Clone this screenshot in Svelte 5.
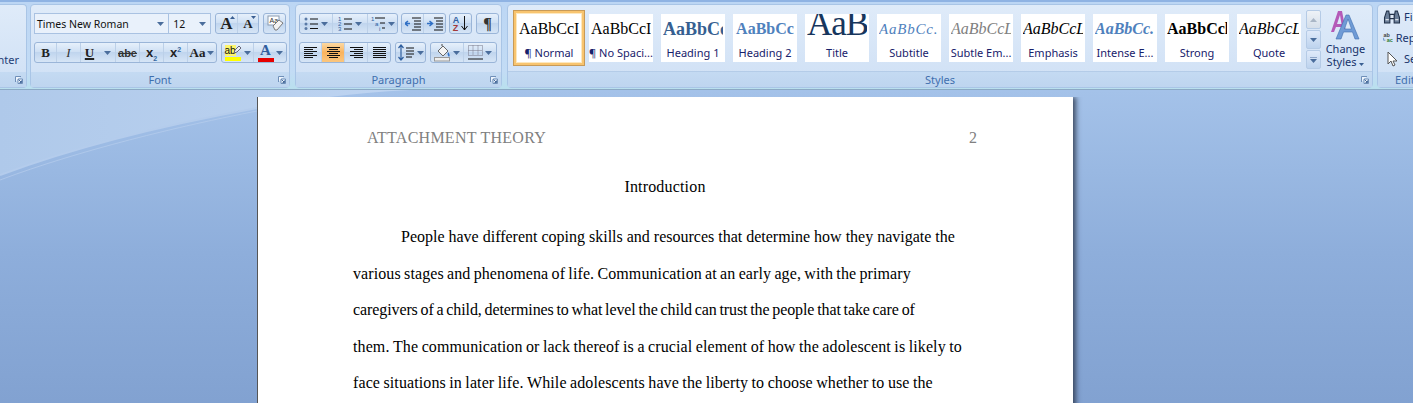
<script>
  const tiles = [
    { cls: 'p-normal', label: '¶ Normal', text: 'AaBbCcI', sel: true },
    { cls: 'p-normal', label: '¶ No Spaci...', text: 'AaBbCcI' },
    { cls: 'p-h1', label: 'Heading 1', text: 'AaBbCc' },
    { cls: 'p-h2', label: 'Heading 2', text: 'AaBbCc' },
    { cls: 'p-title', label: 'Title', text: 'AaB' },
    { cls: 'p-sub', label: 'Subtitle', text: 'AaBbCc.' },
    { cls: 'p-sem', label: 'Subtle Em...', text: 'AaBbCcL' },
    { cls: 'p-em', label: 'Emphasis', text: 'AaBbCcL' },
    { cls: 'p-iem', label: 'Intense E...', text: 'AaBbCc.' },
    { cls: 'p-strong', label: 'Strong', text: 'AaBbCcl' },
    { cls: 'p-em', label: 'Quote', text: 'AaBbCcL' }
  ];
  const lines = [
    { t: 'People have different coping skills and resources that determine how they navigate the', w: 554, ls: 0, indent: true },
    { t: 'various stages and phenomena of life. Communication at an early age, with the primary', w: 558, ls: 0.1 },
    { t: 'caregivers of a child, determines to what level the child can trust the people that take care of', w: 562, ls: -0.1 },
    { t: 'them. The communication or lack thereof is a crucial element of how the adolescent is likely to', w: 609, ls: 0.1 },
    { t: 'face situations in later life. While adolescents have the liberty to choose whether to use the', w: 580, ls: 0.1 }
  ];
</script>

{#snippet arrow()}
  <svg class="arr" width="7" height="4" viewBox="0 0 7 4"><path d="M0 0h7L3.5 4z" fill="#4a6d9c" /></svg>
{/snippet}

{#snippet launcher()}
  <svg class="launch" width="8" height="8" viewBox="0 0 8 8"><path d="M.5 6V.5H6M3 3h4.5v4.5H3z" fill="#eef5fd" stroke="#6f8fb8" /><path d="M3.5 3.5l3 3M6.5 4.5v2h-2" fill="none" stroke="#4a6d9c" /></svg>
{/snippet}

{#snippet bars(rows)}
  <svg width="15" height="13" viewBox="0 0 15 13">
    {#each rows as r, i}
      <path d="M{r[0]} {i * 2 + 1.5}H{r[1]}" stroke="#111" />
    {/each}
  </svg>
{/snippet}

<div class="root">
  <header class="ribbon">
    <section class="group clip">
      <div class="tools clip-tools"><span class="center-tail">nter</span></div>
      <div class="label"><span></span>{@render launcher()}</div>
    </section>

    <section class="group font-group">
      <div class="tools">
        <div class="row">
          <div class="combo font-name"><span>Times New Roman</span>{@render arrow()}</div>
          <div class="combo font-size"><span>12</span>{@render arrow()}</div>
          <div class="bgroup grow">
            <button style="width:22px"><b class="big">A</b><svg class="sup" width="5" height="3" viewBox="0 0 5 3"><path d="M0 3h5L2.500 0z" fill="#3a5f92" /></svg></button>
            <button style="width:20px"><b class="small">A</b><svg class="sup" width="5" height="3" viewBox="0 0 5 3"><path d="M0 0h5L2.500 3z" fill="#3a5f92" /></svg></button>
          </div>
          <div class="bgroup clear">
            <button style="width:21px">
              <svg width="18" height="18" viewBox="0 0 18 18"><rect x="2" y="1" width="11" height="9" fill="#fff" stroke="#8a9bb0" /><text x="3.500" y="8" font-size="7" font-family="Liberation Sans" fill="#333">Aa</text><path d="M7 11l6-6 4 3-6 7H9z" fill="#f3f3f3" stroke="#7a7a7a" /></svg>
            </button>
          </div>
        </div>
        <div class="row wide">
          <div class="bgroup">
            <button style="width:22px"><b class="fmt">B</b></button>
            <button style="width:24px"><i class="fmt">I</i></button>
            <button style="width:35px"><u class="fmt ub">U</u><span class="sp"></span>{@render arrow()}</button>
            <button style="width:24px"><s class="abe">abe</s></button>
            <button style="width:24px"><b class="x">x<sub>2</sub></b></button>
            <button style="width:24px"><b class="x">x<sup>2</sup></b></button>
            <button style="width:28px"><b class="aa">Aa</b>{@render arrow()}</button>
          </div>
          <div class="bgroup">
            <button style="width:32px">
              <span class="hl"><span class="hl-t">ab</span><span class="hl-bar yellow"></span></span>
              <svg class="pen" width="9" height="9" viewBox="0 0 9 9"><path d="M1 8l1-3 4-4 2 2-4 4z" fill="#e8eef6" stroke="#667" /></svg>
              {@render arrow()}
            </button>
            <button style="width:32px">
              <span class="hl"><b class="fc">A</b><span class="hl-bar red"></span></span>
              {@render arrow()}
            </button>
          </div>
        </div>
      </div>
      <div class="label"><span>Font</span>{@render launcher()}</div>
    </section>

    <section class="group para-group">
      <div class="tools">
        <div class="row">
          <div class="bgroup">
            <button style="width:33px">
              <svg width="15" height="13" viewBox="0 0 15 13"><circle cx="2" cy="2" r="1.500" fill="#5a7aa6" /><circle cx="2" cy="7" r="1.500" fill="#5a7aa6" /><circle cx="2" cy="11.500" r="1.500" fill="#5a7aa6" /><path d="M6 2h8M6 7h8M6 11.500h8" stroke="#111" /></svg>
              {@render arrow()}
            </button>
            <button style="width:35px">
              <svg width="15" height="15" viewBox="0 0 15 15"><text x="0" y="5" class="nums">1</text><text x="0" y="10" class="nums">2</text><text x="0" y="15" class="nums">3</text><path d="M6 3h8M6 8h8M6 13h8" stroke="#111" /></svg>
              {@render arrow()}
            </button>
            <button style="width:29px">
              <svg width="15" height="15" viewBox="0 0 15 15"><text x="0" y="5" class="nums">1</text><text x="4" y="10" class="nums">a</text><text x="8" y="15" class="nums">i</text><path d="M4 2h10M9 7h5M11 12h3" stroke="#111" /></svg>
              {@render arrow()}
            </button>
          </div>
          <div class="bgroup">
            <button style="width:22px"><svg width="16" height="14" viewBox="0 0 16 14"><path d="M7 1h9M9 4h7M9 7h7M9 10h7M7 13h9" stroke="#111" /><path d="M0 6.500h5M3 4L0 6.500 3 9" stroke="#2f6fc4" fill="none" stroke-width="1.500" /></svg></button>
            <button style="width:21px"><svg width="16" height="14" viewBox="0 0 16 14"><path d="M7 1h9M9 4h7M9 7h7M9 10h7M7 13h9" stroke="#111" /><path d="M0 6.500h5M2.500 4l3 2.500L2.500 9" stroke="#2f6fc4" fill="none" stroke-width="1.500" /></svg></button>
          </div>
          <div class="bgroup">
            <button style="width:21px"><span class="az"><span class="a">A</span><span class="z">Z</span></span><svg width="7" height="15" viewBox="0 0 7 15"><path d="M3.500 0v14M.5 10l3 4 3-4" stroke="#111" fill="none" /></svg></button>
          </div>
          <div class="bgroup pilcrow">
            <button style="width:21px"><b class="pil">¶</b></button>
          </div>
        </div>
        <div class="row wide">
          <div class="bgroup">
            <button style="width:22px">{@render bars([[1,14],[1,10],[1,14],[1,10],[1,14],[1,10]])}</button>
            <button style="width:23px" class="on">{@render bars([[1,14],[3,12],[1,14],[3,12],[1,14],[3,12]])}</button>
            <button style="width:23px">{@render bars([[1,14],[5,14],[1,14],[5,14],[1,14],[5,14]])}</button>
            <button style="width:22px">{@render bars([[1,14],[1,14],[1,14],[1,14],[1,14],[1,14]])}</button>
          </div>
          <div class="bgroup">
            <button style="width:29px">
              <svg width="17" height="17" viewBox="0 0 17 17"><path d="M3 1v15M.5 4L3 1l2.500 3M.5 13L3 16l2.500-3" stroke="#2f5f9f" fill="none" stroke-width="1.200" /><path d="M8 4h8M8 7h8M8 10h8M8 13h6" stroke="#111" /></svg>
              {@render arrow()}
            </button>
          </div>
          <div class="bgroup">
            <button style="width:33px">
              <svg width="17" height="18" viewBox="0 0 17 18"><path d="M4 7l5-5 5 5-5 5z" fill="#f4f4f4" stroke="#666" /><path d="M8 2V0" stroke="#444" /><path d="M14 8c2 2 2 4 1 5-1-1-2-3-1-5z" fill="#2f6fc4" /><rect x=".5" y="13.500" width="15" height="3.500" fill="#eee" stroke="#999" /></svg>
              {@render arrow()}
            </button>
            <button style="width:32px">
              <svg width="15" height="15" viewBox="0 0 15 15"><path d="M.5 .5h14v10H.5zM.5 5.500h14M5 .5v10M10 .5v10" fill="none" stroke="#778" stroke-dasharray="1 1" /><path d="M0 14h15" stroke="#111" /></svg>
              {@render arrow()}
            </button>
          </div>
        </div>
      </div>
      <div class="label"><span>Paragraph</span>{@render launcher()}</div>
    </section>

    <section class="group styles-group">
      <div class="tools styles-tools">
        <div class="gallery">
          {#each tiles as tile}
            <div class="tile" class:sel={tile.sel}>
              <div class="preview {tile.cls}">{tile.text}</div>
              <div class="tname">{tile.label}</div>
            </div>
          {/each}
        </div>
        <div class="scroll">
          <div class="sb dim"><svg width="7" height="4" viewBox="0 0 7 4"><path d="M0 4h7L3.500 0z" fill="#a9b6c6" /></svg></div>
          <div class="sb"><svg width="7" height="4" viewBox="0 0 7 4"><path d="M0 0h7L3.500 4z" fill="#4a6d9c" /></svg></div>
          <div class="sb"><svg width="7" height="6" viewBox="0 0 7 6"><path d="M0 0h7" stroke="#4a6d9c" /><path d="M0 2h7L3.500 6z" fill="#4a6d9c" /></svg></div>
        </div>
        <div class="change">
          <svg width="34" height="30" viewBox="0 0 34 30">
            <path d="M2 22L9 1h4l4 21h-3l-1-5H7l-2 5zM8 14h4.500L11 5z" fill="#b45ab8" />
            <path d="M7 29L17 5h3l10 24h-4l-2.500-7h-9L12 29zM15.500 19h7L19 9z" fill="#6f9bd6" stroke="#3f6fae" stroke-width=".6" />
          </svg>
          <div class="change-t">Change<br />Styles <svg width="5" height="3" viewBox="0 0 5 3"><path d="M0 0h5L2.500 3z" fill="#3a5f92" /></svg></div>
        </div>
      </div>
      <div class="label"><span>Styles</span>{@render launcher()}</div>
    </section>

    <section class="group edit-group">
      <div class="tools edit-tools">
        <div class="eline">
          <svg width="18" height="15" viewBox="0 0 16 14"><path d="M1 8l2-6h2l1 6v5H1zM10 8l1-6h2l2 6v5h-5z" fill="#6b7f99" stroke="#22324a" /><path d="M6 5h4v4H6z" fill="#dfe8f4" stroke="#22324a" /><path d="M2 10h3M11 10h3" stroke="#fff" /></svg>
          <span>Find</span>
        </div>
        <div class="eline">
          <svg width="18" height="17" viewBox="0 0 16 17"><text x="1" y="7" class="ab">ab</text><text x="6" y="16" class="ac">ac</text><path d="M1 9v4h3" fill="none" stroke="#3a6ab0" /></svg>
          <span>Replace</span>
        </div>
        <div class="eline">
          <svg width="18" height="16" viewBox="0 0 16 16"><path d="M4 1v12l3-3 2 5 2-1-2-4h4z" fill="#fff" stroke="#555" /></svg>
          <span>Select</span>
        </div>
      </div>
      <div class="label edit-label"><span>Editing</span></div>
    </section>
  </header>

  <main class="workspace">
    <svg class="swoosh" width="1413" height="313" viewBox="0 0 1413 313">
      <defs>
        <linearGradient id="sw" x1="0" x2="1" y1="0" y2="0">
          <stop offset="0" stop-color="#afc9ea" />
          <stop offset="1" stop-color="#bed4f1" />
        </linearGradient>
      </defs>
      <path d="M0 85C80 55 180 32 257 18C300 10 350 3 410 0H0z" fill="url(#sw)" />
      <path d="M0 85C80 55 180 32 257 18" fill="none" stroke="#b4ccec" stroke-width="2" />
      <path d="M0 90C80 60 180 36 257 21" fill="none" stroke="#b6cdec" stroke-width="1" opacity=".7" />
    </svg>
    <article class="page">
      <div class="running"><span class="rtitle">ATTACHMENT THEORY</span><span>2</span></div>
      <h1>Introduction</h1>
      {#each lines as line}
        <p class:indent={line.indent} style="width:{line.w}px;letter-spacing:{line.ls}px">
          {#each line.t.split(' ') as word}<span>{word}</span>{/each}
        </p>
      {/each}
    </article>
  </main>
</div>

<style>
  :global(body) { margin: 0; }
  .root {
    width: 1413px; height: 403px; overflow: hidden; display: flex; flex-direction: column;
    font-family: "Noto Sans", sans-serif; background: #a3c1e9;
  }
  .ribbon {
    height: 90px; box-sizing: border-box; flex: none; display: flex; gap: 3px; padding-top: 2px;
    background: linear-gradient(#bcd6f4, #c3dcf5 80%, #b9e0ee);
    border-top: 2px solid #8fb3e3; border-bottom: 1px solid #8ba9c4; overflow: hidden;
  }
  .group {
    box-sizing: border-box; height: 84px; flex: none; display: flex; flex-direction: column;
    border: 1px solid #a9c5e6; border-radius: 4px; background: linear-gradient(#dfebf9, #cfe0f5);
  }
  .tools { height: 67px; box-sizing: border-box; padding: 8px 3px 0; display: flex; flex-direction: column; gap: 8px; }
  .label {
    flex: 1; position: relative; display: flex; align-items: center; justify-content: center;
    font-size: 11px; color: #3f6fae; background: linear-gradient(#c4daf2, #bed5ef);
  }
  .launch { position: absolute; right: 3px; top: 4px; }
  .group:first-child { width: 27px; border-left: 0; border-radius: 0 4px 4px 0; }
  .clip-tools { position: relative; overflow: hidden; }
  .center-tail { position: absolute; right: 7px; top: 47px; font-size: 11px; color: #1f3d75; }
  .font-group { width: 260px; }
  .para-group { width: 207px; margin-left: 2px; }
  .styles-group { width: 866px; margin-left: 2px; }
  .edit-group { width: 60px; margin-left: 1px; }
  .row { display: flex; gap: 3px; height: 21px; }
  .row.wide { gap: 4px; }
  .combo {
    box-sizing: border-box; display: flex; align-items: center; justify-content: space-between;
    background: #e9f1fb; border: 1px solid #a9c2e2; padding: 0 4px 0 2px; font-size: 10.500px; color: #111;
  }
  .font-name { width: 136px; }
  .font-size { width: 42px; margin-left: -3px; border-left: 0; padding-left: 4px; }
  .bgroup {
    box-sizing: border-box; display: flex; height: 21px; border: 1px solid #9ab5d8; border-radius: 3px;
    background: linear-gradient(#e6f0fb, #cfe0f4 45%, #c0d5ee 50%, #d6e5f6);
  }
  .grow { margin-left: 1px; }
  .clear, .pilcrow { margin-left: 1px; }
  button {
    all: unset; box-sizing: border-box; height: 19px; display: flex; align-items: center; justify-content: center;
    gap: 2px; border-right: 1px solid #bcd0e8; position: relative; color: #1a1a1a;
  }
  button:last-child { border-right: 0; }
  button.on { background: linear-gradient(#fcd9a2, #f9b35e 50%, #fbc67e); }
  .big { font: bold 17px "Liberation Serif", serif; color: #222; }
  .small { font: bold 13px "Liberation Serif", serif; color: #222; }
  .sup { position: absolute; right: 2px; top: 2px; }
  .fmt { font: bold 13px "Liberation Serif", serif; color: #222; }
  i.fmt { font: italic 13px "Liberation Serif", serif; color: #333; }
  .ub { text-decoration-thickness: 1.500px; }
  .sp { width: 6px; }
  .abe { font: bold 11px "Liberation Sans", sans-serif; color: #333; }
  .x { font: bold 13px "Liberation Sans", sans-serif; color: #222; }
  .x sub, .x sup { font-size: 7px; color: #35689f; line-height: 0; }
  .aa { font: bold 13px "Liberation Serif", serif; color: #222; }
  .hl { display: flex; flex-direction: column; align-items: center; width: 16px; }
  .hl-t { font: 10px/11px "Liberation Sans", sans-serif; background: #fdf56b; color: #111; align-self: flex-start; }
  .hl-bar { display: block; width: 16px; height: 4px; margin-top: 1px; }
  .yellow { background: #ffff00; }
  .red { background: #e60000; }
  .pen { margin-left: -10px; margin-top: -6px; }
  .fc { font: bold 15px/13px "Liberation Serif", serif; color: #2f5d9e; }
  .nums { font: 6px "Liberation Sans", sans-serif; fill: #2f5f9f; }
  .ab { font: bold 9px "Liberation Sans", sans-serif; fill: #444; }
  .ac { font: bold 9px "Liberation Sans", sans-serif; fill: #2e7d32; }
  .az { display: flex; flex-direction: column; font: bold 9px/8px "Liberation Sans", sans-serif; }
  .a { color: #2f5f9f; }
  .z { color: #a33a3a; }
  .pil { font: bold 16px "Liberation Serif", serif; color: #333; }
  .styles-tools { flex-direction: row; gap: 0; padding: 5px 0 0 6px; position: relative; border-bottom: 1px solid #b4cce8; }
  .gallery { display: flex; gap: 8px; width: 792px; flex: none; padding-left: 3px; box-sizing: border-box; margin-top: 4px; }
  .tile { width: 64px; height: 48px; flex: none; background: #fff; display: flex; flex-direction: column; align-items: center; }
  .tile.sel { box-shadow: 0 0 0 1px #fde8bf, 0 0 0 3px #f8c46f, 0 0 0 4px #c79a58; }
  .preview {
    width: 60px; height: 30px; overflow: hidden; white-space: nowrap; text-align: center; line-height: 30px;
    font-family: "Liberation Serif", serif; font-size: 16px; color: #000;
  }
  .p-h1 { font-weight: bold; font-size: 18px; color: #365f91; text-align: left; }
  .p-h2 { font-weight: bold; font-size: 16px; color: #4f81bd; }
  .p-title { font-size: 35px; color: #17365d; line-height: 19px; letter-spacing: -1px; }
  .p-sub { font-style: italic; font-size: 15px; color: #4f81bd; letter-spacing: .8px; text-align: left; }
  .p-sem { font-style: italic; color: #808080; }
  .p-em { font-style: italic; }
  .p-iem { font-style: italic; font-weight: bold; color: #4f81bd; text-align: left; }
  .p-strong { font-weight: bold; }
  .tname { font-size: 11px; line-height: 14px; color: #17216b; white-space: nowrap; margin-top: 2px; }
  .scroll { width: 15px; display: flex; flex-direction: column; gap: 1px; flex: none; }
  .sb {
    box-sizing: border-box; height: 19px; border: 1px solid #b5cbe6; border-radius: 2px; display: flex;
    align-items: center; justify-content: center; background: linear-gradient(#dfeafa, #bdd3ee);
  }
  .sb.dim { background: linear-gradient(#eef2f7, #d5dfea); }
  .change { width: 49px; display: flex; flex-direction: column; align-items: center; }
  .change-t { font-size: 11px; line-height: 13px; color: #17336b; text-align: center; margin-top: 2px; }
  .edit-tools { padding: 2px 0 0 5px; gap: 2px; }
  .eline { display: flex; align-items: center; gap: 3px; height: 19px; font-size: 11px; color: #17336b; white-space: nowrap; }
  .edit-label { justify-content: flex-start; padding-left: 17px; }
  .workspace {
    flex: 1; position: relative; display: flex; justify-content: flex-start; padding: 7px 0 0 257px;
    background: linear-gradient(#a4c2e9, #8eaedb 40%, #7a9acb);
  }
  .swoosh { position: absolute; left: 0; top: 0; }
  .page {
    position: relative; box-sizing: border-box; width: 816px; height: 400px; background: #fff;
    border-left: 1px solid #555; box-shadow: 3px 0 5px rgba(40, 50, 70, .8); clip-path: inset(0 -12px 0 0);
    padding: 31px 95px 0 95px; font: 16px "Liberation Serif", serif; color: #000;
  }
  .running { display: flex; justify-content: space-between; line-height: 20px; color: #808080; padding: 0 0 0 14px; width: 624px; box-sizing: border-box; }
  .rtitle { letter-spacing: .26px; }
  h1 { font: 16px/20px "Liberation Serif", serif; letter-spacing: .17px; margin: 29px 0 0; text-align: center; width: 624px; }
  p { margin: 0; height: 36.500px; display: flex; align-items: center; justify-content: space-between; white-space: nowrap; }
  h1 + p { margin-top: 21.750px; }
  .indent { margin-left: 48px; }
</style>
